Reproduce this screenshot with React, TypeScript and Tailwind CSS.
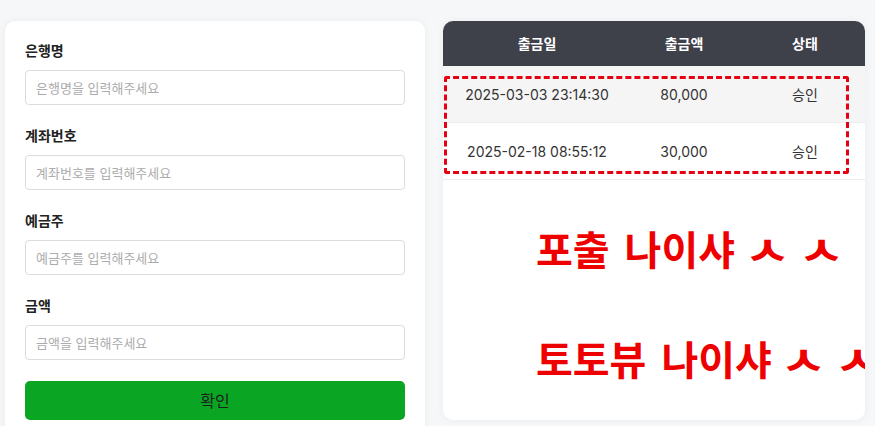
const fields = [
  { label: '은행명', placeholder: '은행명을 입력해주세요' },
  { label: '계좌번호', placeholder: '계좌번호를 입력해주세요' },
  { label: '예금주', placeholder: '예금주를 입력해주세요' },
  { label: '금액', placeholder: '금액을 입력해주세요' },
]

const rows = [
  { date: '2025-03-03 23:14:30', amount: '80,000', status: '승인', bg: 'bg-[#f5f5f5]' },
  { date: '2025-02-18 08:55:12', amount: '30,000', status: '승인', bg: 'bg-white' },
]

function Note({ first, top }: { first: string; top: string }) {
  return (
    <div
      className={`absolute left-[93px] ${top} flex whitespace-nowrap text-[40px] leading-[50px] font-bold text-[#ee0000]`}
      style={{ fontFamily: '"Noto Sans CJK KR", sans-serif' }}
    >
      <span>{first}</span>
      <span className="ml-[15px]">나이샤</span>
      <span className="ml-[12px] w-[40px] shrink-0 text-center">
        <span className="inline-block scale-x-125">ㅅ</span>
      </span>
      <span className="ml-[14px] w-[40px] shrink-0 text-center">
        <span className="inline-block scale-x-125">ㅅ</span>
      </span>
    </div>
  )
}

function App() {
  return (
    <div
      className="min-h-screen bg-[#f6f7f9] pl-[5px] pt-[21px] pr-[10px] flex items-start gap-[18px]"
      style={{ fontFamily: 'Inter, "Noto Sans CJK KR", sans-serif' }}
    >
      {/* withdraw form */}
      <div className="w-[420px] bg-white rounded-t-[10px] px-5 pt-5 pb-6 shadow-[0_0_8px_rgba(0,0,0,0.05)]">
        {fields.map((f) => (
          <div key={f.label} className="mb-[21px]">
            <label className="block text-[14px] leading-[20px] font-semibold text-[#222] mb-[9px]">
              {f.label}
            </label>
            <input
              type="text"
              placeholder={f.placeholder}
              className="w-full h-[35px] px-[10px] text-[13px] border border-[#dcdcdc] rounded-[4px] placeholder:text-[#acacac] focus:outline-none"
            />
          </div>
        ))}
        <button className="w-full h-[39px] bg-[#09a523] rounded-[5px] text-[16px] text-[#1f1f1f]">
          확인
        </button>
      </div>

      {/* withdraw history */}
      <div className="relative w-[422px] h-[399px] bg-white rounded-[10px] overflow-hidden shadow-[0_0_8px_rgba(0,0,0,0.05)]">
        <div className="grid grid-cols-[188px_106px_1fr] h-[45px] items-center bg-[#3f414a] text-white text-[14px] font-bold">
          <div className="text-center">출금일</div>
          <div className="text-center">출금액</div>
          <div className="text-center pl-2">상태</div>
        </div>
        {rows.map((r) => (
          <div
            key={r.date}
            className={`grid grid-cols-[188px_106px_1fr] h-[57px] items-center border-b border-[#ececec] text-[14px] text-[#333] ${r.bg}`}
          >
            <div className="text-center">{r.date}</div>
            <div className="text-center">{r.amount}</div>
            <div className="text-center pl-2">{r.status}</div>
          </div>
        ))}

        {/* annotation overlay */}
        <div className="absolute left-[1px] top-[55px] w-[405px] h-[98px] border-[3px] border-dashed border-[#e60012] rounded-[3px]" />
        <Note first="포출" top="top-[202px]" />
        <Note first="토토뷰" top="top-[312px]" />
      </div>
    </div>
  )
}

export default App
